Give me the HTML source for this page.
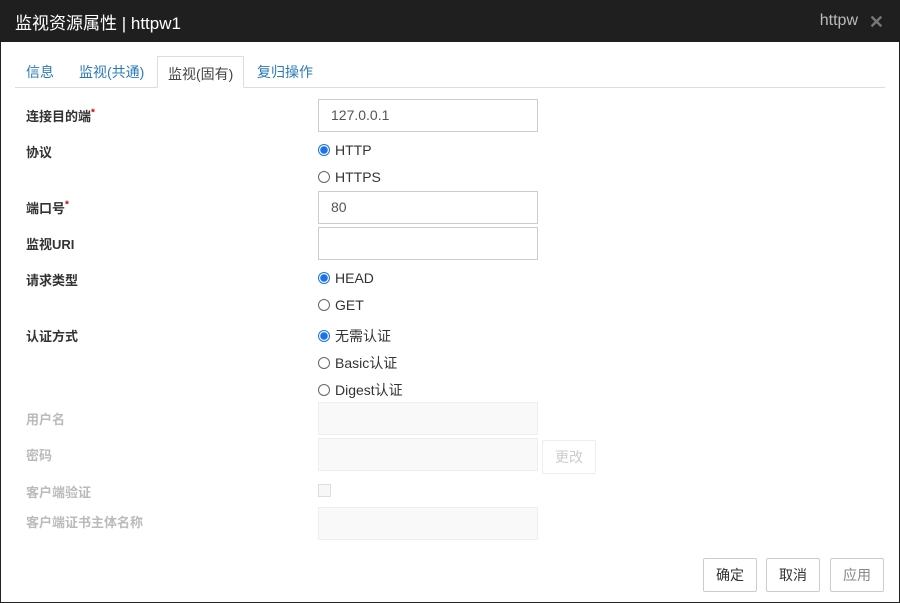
<!DOCTYPE html>
<html><head><meta charset="utf-8"><style>
*{box-sizing:border-box;margin:0;padding:0}
body{width:900px;height:603px;background:#fff;font-family:"Liberation Sans","Noto Sans CJK SC",sans-serif;font-size:13px;color:#333;position:relative;overflow:hidden;box-shadow:inset 0 0 0 1px #222}
.t{position:absolute;left:0;top:0;width:900px;height:42px;background:#1f1f1f;color:#fff;font-size:17px}
.t .a{position:absolute;left:15px;top:9px}
.t .b{position:absolute;right:42px;top:12px;color:#bbb;font-size:16px}
.t .c{position:absolute;right:16px;top:12px;color:#777;font-size:18px;font-weight:bold}
.tabs{position:absolute;left:15px;top:87px;width:870px;border-top:1px solid #ddd}
.tab{position:absolute;top:62px;font-size:14px;color:#2a7ab8}
.tab.on{top:56px;left:157px;width:87px;height:32px;border:1px solid #ddd;border-bottom:1px solid #fff;background:#fff;color:#444;padding:7px 0 0 10px}
.l{position:absolute;left:26px;font-weight:bold;color:#333}
.l.d{color:#bbb;font-weight:bold}
.l sup{color:#c00;font-size:10px}
.i{position:absolute;left:318px;width:220px;height:33px;border:1px solid #ccc;padding:7px 12px;font-size:14px;color:#555}
.i.d{border-color:#eee;background:#f9f9f9}
.r{position:absolute;left:318px;font-size:14px;color:#333}
.r i{display:inline-block;width:12px;height:12px;border:1px solid #666;border-radius:50%;vertical-align:-1px;margin-right:5px}
.r i.on{border:1px solid #1a73e8;background:radial-gradient(circle,#1a73e8 3.5px,#fff 4px)}
.btn{position:absolute;top:558px;width:54px;height:34px;border:1px solid #ccc;border-radius:2px;text-align:center;line-height:32px;font-size:14px;color:#333}
</style></head><body>
<div class="t"><span class="a">监视资源属性 | httpw1</span><span class="b">httpw</span><span class="c">✕</span></div>
<div class="tabs"></div>
<div class="tab" style="left:26px">信息</div>
<div class="tab" style="left:79px">监视(共通)</div>
<div class="tab on">监视(固有)</div>
<div class="tab" style="left:257px">复归操作</div>

<div class="l" style="top:106px">连接目的端<sup>*</sup></div>
<div class="i" style="top:99px">127.0.0.1</div>
<div class="l" style="top:142px">协议</div>
<div class="r" style="top:142px"><i class="on"></i>HTTP</div>
<div class="r" style="top:169px"><i></i>HTTPS</div>
<div class="l" style="top:198px">端口号<sup>*</sup></div>
<div class="i" style="top:191px">80</div>
<div class="l" style="top:234px">监视URI</div>
<div class="i" style="top:227px"></div>
<div class="l" style="top:270px">请求类型</div>
<div class="r" style="top:270px"><i class="on"></i>HEAD</div>
<div class="r" style="top:297px"><i></i>GET</div>
<div class="l" style="top:326px">认证方式</div>
<div class="r" style="top:326px"><i class="on"></i>无需认证</div>
<div class="r" style="top:353px"><i></i>Basic认证</div>
<div class="r" style="top:380px"><i></i>Digest认证</div>
<div class="l d" style="top:409px">用户名</div>
<div class="i d" style="top:402px"></div>
<div class="l d" style="top:445px">密码</div>
<div class="i d" style="top:438px"></div>
<div class="btn" style="top:440px;left:542px;border-color:#eee;color:#ccc">更改</div>
<div class="l d" style="top:482px">客户端验证</div>
<div style="position:absolute;left:318px;top:484px;width:13px;height:13px;border:1px solid #ddd;background:#f7f7f7"></div>
<div class="l d" style="top:512px">客户端证书主体名称</div>
<div class="i d" style="top:507px"></div>
<div class="btn" style="left:703px">确定</div>
<div class="btn" style="left:766px">取消</div>
<div class="btn" style="left:830px;color:#888">应用</div>
</body></html>
